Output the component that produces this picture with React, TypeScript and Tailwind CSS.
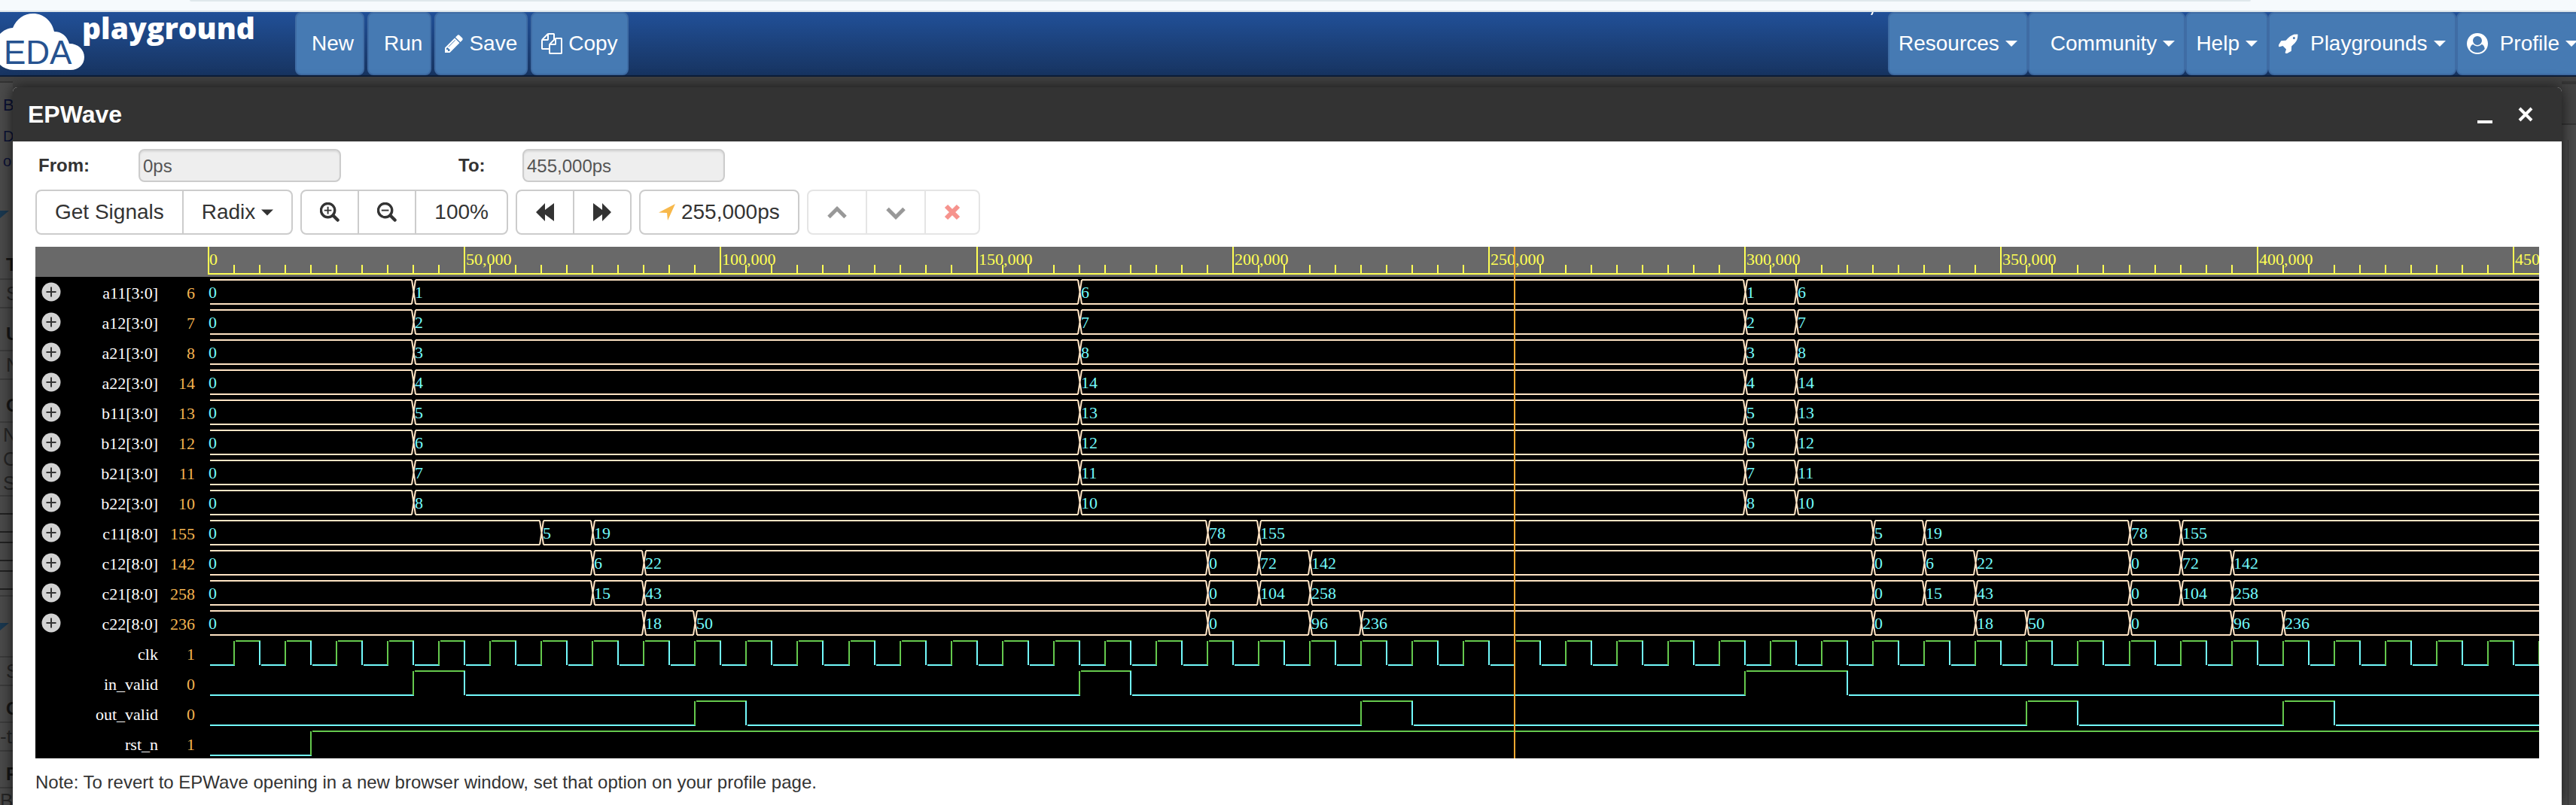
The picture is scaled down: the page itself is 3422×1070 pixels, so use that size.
import React from "react";

/* ---------- icons ---------- */

function Caret({ className = "" }: { className?: string }) {
  return (
    <svg viewBox="0 0 16 8" className={"h-2 w-4 shrink-0 " + className} fill="currentColor" aria-hidden="true">
      <path d="M0 0h16L8 8z" />
    </svg>
  );
}

function PencilIcon() {
  return (
    <svg viewBox="128 128 1536 1536" className="h-6 w-6 shrink-0" fill="currentColor" aria-hidden="true">
      <path d="M491 1536l91-91-235-235-91 91v107h128v128h107zm523-928q0-22-22-22-10 0-17 7l-542 542q-7 7-7 17 0 22 22 22 10 0 17-7l542-542q7-7 7-17zm-54-192l416 416-832 832h-416v-416zm683 96q0 53-37 90l-166 166-416-416 166-165q36-38 90-38 53 0 91 38l235 234q37 39 37 91z" />
    </svg>
  );
}

function FilesIcon() {
  return (
    <svg viewBox="0 0 1792 1792" className="h-7 w-7 shrink-0" fill="currentColor" aria-hidden="true">
      <path d="M1696 384q40 0 68 28t28 68v1216q0 40-28 68t-68 28h-960q-40 0-68-28t-28-68v-288h-544q-40 0-68-28t-28-68v-672q0-40 20-88t48-76l408-408q28-28 76-48t88-20h416q40 0 68 28t28 68v328q68-40 128-40h416zm-544 213l-299 299h299v-299zm-640-384l-299 299h299v-299zm196 647l316-316v-416h-384v416q0 40-28 68t-68 28h-416v640h512v-256q0-40 20-88t48-76zm956 804v-1152h-384v416q0 40-28 68t-68 28h-416v640h896z" />
    </svg>
  );
}

function RocketIcon() {
  return (
    <svg viewBox="64 96 1632 1632" className="h-[26px] w-[26px] shrink-0" fill="currentColor" aria-hidden="true">
      <path d="M1440 448q0-40-28-68t-68-28-68 28-28 68 28 68 68 28 68-28 28-68zm224-288q0 249-75.500 430.500t-253.500 360.500q-81 80-195 176l-20 379q-2 16-16 26l-384 224q-7 4-16 4-12 0-23-9l-64-64q-13-14-8-32l85-276-281-281-276 85q-3 1-9 1-14 0-23-9l-64-64q-17-19-5-39l224-384q10-14 26-16l379-20q96-114 176-195 188-187 358-258t431-71q14 0 24 9.500t10 22.500z" />
    </svg>
  );
}

function UserIcon() {
  return (
    <svg viewBox="0 0 1792 1792" className="h-7 w-7 shrink-0" fill="currentColor" aria-hidden="true">
      <path d="M1523 1339q-22-155-87.500-257.500t-184.500-118.500q-67 74-159.500 115.500t-195.500 41.500-195.500-41.500-159.500-115.500q-119 16-184.500 118.500t-87.500 257.500q106 150 271 237.500t356 87.500 356-87.500 271-237.500zm-243-699q0-159-112.500-271.500t-271.500-112.500-271.500 112.500-112.500 271.500 112.500 271.500 271.500 112.500 271.500-112.500 112.500-271.500zm512 256q0 182-71 347.500t-190.500 286-285.500 191.500-349 71q-182 0-348-71t-286-191-191-286-71-348 71-348 191-286 286-191 348-71 348 71 286 191 191 286 71 348z" />
    </svg>
  );
}

function ZoomIcon({ plus }: { plus?: boolean }) {
  return (
    <svg viewBox="1 1 27 27" className="h-[26px] w-[26px]" fill="none" stroke="currentColor" aria-hidden="true">
      <circle cx="12" cy="12" r="9.500" strokeWidth="3.500" />
      <path d="M19.500 19.500l6 6" strokeWidth="4.500" strokeLinecap="round" />
      <path d={plus ? "M7 12h10M12 7v10" : "M7 12h10"} strokeWidth="2" />
    </svg>
  );
}

function SkipIcon({ forward }: { forward?: boolean }) {
  return (
    <svg viewBox="1 1 26 26" className="h-[26px] w-[26px]" fill="currentColor" aria-hidden="true">
      <path d={forward ? "M2 2l12 9V2l12 12-12 12v-9L2 26z" : "M26 2l-12 9V2L2 14l12 12v-9l12 9z"} />
    </svg>
  );
}

function ChevronIcon({ down }: { down?: boolean }) {
  return (
    <svg viewBox="0 0 28 28" className="h-7 w-7" fill="none" stroke="currentColor" strokeWidth="5" aria-hidden="true">
      <path d={down ? "M3 9.500l11 11 11-11" : "M3 20.500l11-11 11 11"} />
    </svg>
  );
}

/* ---------- top bar ---------- */

const NAV =
  "flex h-[84px] shrink-0 items-center rounded-lg border-2 border-[#3f6ca4] bg-[#467ab3] text-[28px] leading-10 text-white";

function Logo() {
  return (
    <a href="#home" aria-label="EDA playground" className="flex w-[392px] shrink-0">
      <svg viewBox="0 0 360 84" className="h-[84px] w-[360px] overflow-visible">
        <path
          fill="#fff"
          d="M-8 50C-8 34 3 22 17 21C22 9 32 2 44 2C58 2 69 12 72 26C82 26 89 32 92 42C104 42 112 50 112 60C112 70 104 77 94 77H18C3 77 -8 66 -8 50Z"
        />
        <text x="5" y="69" fontFamily="'Liberation Sans', Arial, sans-serif" fontSize="44" fill="#26528f">
          EDA
        </text>
        <text x="109" y="36" fontFamily="'Open Sans', sans-serif" fontWeight="800" fontSize="39" fill="#fff">
          playground
        </text>
      </svg>
    </a>
  );
}

function TopBar() {
  return (
    <header>
      <div className="flex h-4 justify-center border-b-2 border-[#dbe4e9] bg-[#f6fafd]">
        <div className="mr-[180px] h-[2px] w-4/5 rounded-b-sm bg-[#dfe8ec]" />
      </div>
      <nav className="flex overflow-hidden border-b-2 border-[#0d1e3a] bg-linear-to-b from-[#215098] to-[#173461]">
        <Logo />
        <div className="flex gap-1">
          <button className={NAV + " pr-3 pl-5"}>New</button>
          <button className={NAV + " pr-2.5 pl-5"}>Run</button>
          <button className={NAV + " gap-2 px-3"}>
            <PencilIcon />
            Save
          </button>
          <button className={NAV + " gap-2 px-3"}>
            <FilesIcon />
            Copy
          </button>
        </div>
        <div className="-mr-4 ml-auto flex">
          <svg viewBox="0 0 8 4" className="mr-4 h-1 w-2" aria-hidden="true">
            <path d="M4 0L2 4" stroke="#fff" strokeWidth="2" />
          </svg>
          <button className={NAV + " gap-2 px-3"}>
            Resources
            <Caret />
          </button>
          <button className={NAV + " gap-2 pr-3 pl-7"}>
            Community
            <Caret />
          </button>
          <button className={NAV + " gap-2 px-3"}>
            Help
            <Caret />
          </button>
          <button className={NAV + " px-3"}>
            <RocketIcon />
            <span className="mr-2 ml-4">Playgrounds</span>
            <Caret />
          </button>
          <button className={NAV + " px-3"}>
            <UserIcon />
            <span className="mr-2 ml-4">Profile</span>
            <Caret />
          </button>
        </div>
      </nav>
    </header>
  );
}

/* ---------- dimmed page edges ---------- */

const LINE = "border-b-2 border-[#3c3c3c]";

function LeftEdge() {
  return (
    <aside className="w-[17px] shrink-0 overflow-hidden border-t-2 border-[#333] bg-[#4b4b4b] leading-8 text-[#262626]">
      <div className="flex h-[60px] items-center pl-1 text-[22px] text-[#0b1236]">B</div>
      <div className="flex h-[22px] items-center pl-1 text-xl text-[#0b1236]">D</div>
      <div className="flex h-[44px] items-center pl-1 text-xl text-[#0b1236]">o</div>
      <div className="flex h-[98px] items-center">
        <svg viewBox="0 0 12 10" className="h-[10px] w-3" aria-hidden="true">
          <path d="M-12 0H12L0 10z" fill="#1a3850" />
        </svg>
      </div>
      <div className={"flex h-[38px] items-center pl-2 text-2xl font-bold text-[#161616] " + LINE}>T</div>
      <div className={"flex h-[38px] items-center pl-2 text-[26px] " + LINE}>S</div>
      <div className={"flex h-[57px] items-center pt-3 pl-2 text-2xl font-bold text-[#161616] " + LINE}>U</div>
      <div className={"flex h-[38px] items-center pl-2 text-[26px] " + LINE}>N</div>
      <div className={"flex h-[57px] items-center pt-3 pl-2 text-2xl font-bold text-[#161616] " + LINE}>O</div>
      <div className={"flex h-[98px] flex-col pl-1 text-[26px] " + LINE}>
        <span>N</span>
        <span>C</span>
        <span>S</span>
      </div>
      <div className={"flex h-[133px] flex-col gap-3 pt-[22px] " + LINE}>
        <div className="h-[26px] border-y-2 border-[#222]" />
        <div className="h-[26px] border-y-2 border-[#222]" />
        <div className="h-[26px] border-y-2 border-[#222]" />
      </div>
      <div className={"flex h-[81px] items-center " + LINE}>
        <svg viewBox="0 0 12 10" className="h-[10px] w-3" aria-hidden="true">
          <path d="M-12 0H12L0 10z" fill="#1a3850" />
        </svg>
      </div>
      <div className={"flex h-[38px] items-center pl-2 text-[26px] " + LINE}>S</div>
      <div className={"flex h-[49px] items-center pt-3 pl-2 text-2xl font-bold text-[#161616] " + LINE}>C</div>
      <div className={"flex h-[38px] items-center text-[26px] " + LINE}>-t</div>
      <div className={"flex h-[49px] items-center pt-3 pl-2 text-2xl font-bold text-[#161616] " + LINE}>F</div>
      <div className="flex h-[21px] items-start text-[26px]">B</div>
    </aside>
  );
}

function RightEdge() {
  return (
    <aside className="flex w-[19px] shrink-0 flex-col border-t-4 border-[#363636] bg-[#4b4b4b]">
      <div className="h-[54px] border-b-2 border-[#363636] bg-[#444]" />
      <div className="mt-[20px] ml-2 flex-1 border-l border-[#3a3a3a]" />
    </aside>
  );
}

/* ---------- waveform data (times in ns, 1 ns = 1000 ps) ---------- */

type Step = [number, string];
type Signal =
  | { kind: "bus"; name: string; value: string; steps: Step[] }
  | { kind: "bit"; name: string; value: string; toggles: number[] };

const END = 455;
const PX = 6.804;
const ORIGIN = 2;
const ROW = 40;
const RULER = 40;
const X = (t: number) => Math.round(ORIGIN + t * PX);

const input = (name: string, first: string, second: string): Signal => ({
  kind: "bus",
  name,
  value: second,
  steps: [
    [0, "0"],
    [40, first],
    [170, second],
    [300, first],
    [310, second],
  ],
});

const range = (n: number) => Array.from({ length: n }, (_, i) => i);

const SIGNALS: Signal[] = [
  input("a11[3:0]", "1", "6"),
  input("a12[3:0]", "2", "7"),
  input("a21[3:0]", "3", "8"),
  input("a22[3:0]", "4", "14"),
  input("b11[3:0]", "5", "13"),
  input("b12[3:0]", "6", "12"),
  input("b21[3:0]", "7", "11"),
  input("b22[3:0]", "8", "10"),
  {
    kind: "bus",
    name: "c11[8:0]",
    value: "155",
    steps: [[0, "0"], [65, "5"], [75, "19"], [195, "78"], [205, "155"], [325, "5"], [335, "19"], [375, "78"], [385, "155"]],
  },
  {
    kind: "bus",
    name: "c12[8:0]",
    value: "142",
    steps: [[0, "0"], [75, "6"], [85, "22"], [195, "0"], [205, "72"], [215, "142"], [325, "0"], [335, "6"], [345, "22"], [375, "0"], [385, "72"], [395, "142"]],
  },
  {
    kind: "bus",
    name: "c21[8:0]",
    value: "258",
    steps: [[0, "0"], [75, "15"], [85, "43"], [195, "0"], [205, "104"], [215, "258"], [325, "0"], [335, "15"], [345, "43"], [375, "0"], [385, "104"], [395, "258"]],
  },
  {
    kind: "bus",
    name: "c22[8:0]",
    value: "236",
    steps: [[0, "0"], [85, "18"], [95, "50"], [195, "0"], [215, "96"], [225, "236"], [325, "0"], [345, "18"], [355, "50"], [375, "0"], [395, "96"], [405, "236"]],
  },
  { kind: "bit", name: "clk", value: "1", toggles: range(91).map((i) => 5 + i * 5) },
  { kind: "bit", name: "in_valid", value: "0", toggles: [40, 50, 170, 180, 300, 320] },
  { kind: "bit", name: "out_valid", value: "0", toggles: [95, 105, 225, 235, 355, 365, 405, 415] },
  { kind: "bit", name: "rst_n", value: "1", toggles: [20] },
];

const SERIF = "'Liberation Serif', 'Times New Roman', serif";
const GREEN = "#65c94d";
const CYAN = "#73fbfd";

function BusTrace({ steps, y }: { steps: Step[]; y: number }) {
  const top = y + 4;
  const bottom = y + 36;
  return (
    <g>
      {steps.map(([t, label], i) => {
        const x0 = i === 0 ? X(0) + 2 : X(t) + 3;
        const last = i === steps.length - 1;
        const x1 = last ? X(END) : X(steps[i + 1][0]) - 2;
        return (
          <g key={t}>
            <path d={`M${x0} ${top}H${x1}M${x0} ${bottom}H${x1}`} stroke="#ffe4c4" strokeWidth="2" shapeRendering="crispEdges" />
            {!last && <path d={`M${x1} ${top}L${x1 + 5} ${bottom}M${x1 + 5} ${top}L${x1} ${bottom}`} stroke="#ffe4c4" strokeWidth="2" fill="none" />}
            <text x={i === 0 ? X(0) : X(t) + 2} y={y + 28} fontSize="22" fontFamily={SERIF} fill={CYAN}>
              {label}
            </text>
          </g>
        );
      })}
    </g>
  );
}

function BitTrace({ toggles, y }: { toggles: number[]; y: number }) {
  const points = [0, ...toggles];
  return (
    <g strokeWidth="2" shapeRendering="crispEdges">
      {points.map((t, i) => {
        const high = i % 2 === 1;
        const level = high ? y + 4 : y + 36;
        const end = i + 1 < points.length ? X(points[i + 1]) + 1 : X(END);
        return (
          <g key={t} stroke={high ? GREEN : CYAN}>
            {i > 0 && <path d={`M${X(t)} ${y + 4}V${y + 36}`} />}
            {t < END && <path d={`M${X(t) + 2} ${level}H${end}`} />}
          </g>
        );
      })}
    </g>
  );
}

function WaveCanvas() {
  const height = RULER + ROW * SIGNALS.length;
  return (
    <svg className="h-[680px] min-w-0 flex-1 overflow-hidden bg-black" role="img" aria-label="Signal waveforms">
      <rect width="100%" height={RULER} fill="#696969" />
      <g stroke="#ffff54" strokeWidth="2" shapeRendering="crispEdges">
        <path d={`M${X(0) - 1} 36H${X(END)}`} />
        {range(91).map((i) => (
          <path key={i} d={`M${X(i * 5)} ${i % 10 === 0 ? 0 : 24}V36`} />
        ))}
      </g>
      {range(10).map((i) => (
        <text key={i} x={X(i * 50) + (i ? 2 : 1)} y="24" fontSize="22" fontFamily={SERIF} fill="#ffff54">
          {(i * 50000).toLocaleString("en-US")}
        </text>
      ))}
      {SIGNALS.map((s, i) =>
        s.kind === "bus" ? (
          <BusTrace key={s.name} steps={s.steps} y={RULER + i * ROW} />
        ) : (
          <BitTrace key={s.name} toggles={s.toggles} y={RULER + i * ROW} />
        ),
      )}
      <path d={`M${X(255)} 0V${height}`} stroke="#f0a830" strokeWidth="2" shapeRendering="crispEdges" />
    </svg>
  );
}

function SignalList() {
  return (
    <div className="w-[228px] shrink-0 bg-black font-['Liberation_Serif','Times_New_Roman',serif] text-[22px]">
      <div className="h-10 bg-[#696969]" />
      <ul>
        {SIGNALS.map((s) => (
          <li key={s.name} className="flex h-10 items-center pl-2">
            {s.kind === "bus" && (
              <button aria-label={"Expand " + s.name} className="h-[26px] w-[26px]">
                <svg viewBox="0 0 26 26" className="h-full w-full">
                  <circle cx="13" cy="13" r="12.500" fill="#d3d3d3" />
                  <path d="M13 6.500v13M6.500 13h13" stroke="#333" strokeWidth="2" />
                </svg>
              </button>
            )}
            <span className="ml-auto pt-1 leading-9 text-white">{s.name}</span>
            <span className="mr-4 w-[49px] pt-1 text-right leading-9 text-[#f4b350]">{s.value}</span>
          </li>
        ))}
      </ul>
    </div>
  );
}

/* ---------- wave window ---------- */

const GROUP = "flex h-[60px] divide-x-2 divide-[#ccc] rounded-lg border-2 border-[#ccc] bg-white";
const TOOL = "flex items-center justify-center px-6";

function TextField({ id, label, value, className }: { id: string; label: string; value: string; className: string }) {
  return (
    <div className={"flex items-center " + className}>
      <label htmlFor={id} className="flex-1 text-2xl font-bold text-[#333]">
        {label}
      </label>
      <input
        id={id}
        readOnly
        value={value}
        className="h-11 w-[269px] rounded-lg border-2 border-[#ccc] bg-[#eee] px-1 pt-[2px] text-2xl text-[#555] shadow-[inset_0_2px_2px_rgba(0,0,0,0.075)]"
      />
    </div>
  );
}

function Toolbar() {
  return (
    <div className="mt-[10px] flex gap-[10px] pl-[30px] text-[28px] leading-10 text-[#333]">
      <div className={GROUP}>
        <button className={TOOL}>Get Signals</button>
        <button className={TOOL + " gap-2"}>
          Radix
          <Caret className="h-[9px]" />
        </button>
      </div>
      <div className={GROUP}>
        <button className={TOOL} aria-label="Zoom in">
          <ZoomIcon plus />
        </button>
        <button className={TOOL} aria-label="Zoom out">
          <ZoomIcon />
        </button>
        <button className={TOOL}>100%</button>
      </div>
      <div className={GROUP}>
        <button className={TOOL} aria-label="Back">
          <SkipIcon />
        </button>
        <button className={TOOL} aria-label="Forward">
          <SkipIcon forward />
        </button>
      </div>
      <div className={GROUP}>
        <button className={TOOL + " gap-2"}>
          <svg viewBox="0 0 22 22" className="h-[22px] w-[22px]" fill="#f7b84b" aria-hidden="true">
            <path d="M22 0L12 22L11 12L0 11.500z" />
          </svg>
          255,000ps
        </button>
      </div>
      <div className={GROUP + " opacity-50"}>
        <button className={TOOL} aria-label="Previous edge">
          <ChevronIcon />
        </button>
        <button className={TOOL} aria-label="Next edge">
          <ChevronIcon down />
        </button>
        <button className={TOOL} aria-label="Remove cursor">
          <svg viewBox="0 0 22 22" className="h-[22px] w-[22px]" fill="none" stroke="#ee2a1e" strokeWidth="6" aria-hidden="true">
            <path d="M3 3l16 16M19 3L3 19" />
          </svg>
        </button>
      </div>
    </div>
  );
}

function WaveWindow() {
  return (
    <section className="relative z-10 mt-2 flex min-w-0 flex-1 flex-col rounded-t-md bg-white shadow-[0_0_20px_rgba(0,0,0,0.7)]">
      <div className="flex h-[72px] items-center rounded-t-md bg-[#333] pr-9 pl-5 text-white">
        <h1 className="flex-1 text-[32px] leading-10 font-bold">EPWave</h1>
        <button aria-label="Minimize" className="mr-[30px] h-6 w-6">
          <svg viewBox="0 0 24 24" className="h-6 w-6">
            <path d="M2 22h20" stroke="#fff" strokeWidth="4" />
          </svg>
        </button>
        <button aria-label="Close" className="h-6 w-6">
          <svg viewBox="0 0 24 24" className="h-6 w-6">
            <path d="M4 4l16 16M20 4L4 20" stroke="#fff" strokeWidth="4" />
          </svg>
        </button>
      </div>
      <div className="mt-[10px] flex">
        <TextField id="from" label="From:" value="0ps" className="ml-[34px] w-[402px]" />
        <TextField id="to" label="To:" value="455,000ps" className="ml-[156px] w-[354px]" />
      </div>
      <Toolbar />
      <div className="mx-[30px] mt-4 flex">
        <SignalList />
        <WaveCanvas />
      </div>
      <p className="mt-4 ml-[30px] text-2xl leading-8 text-[#333]">
        Note: To revert to EPWave opening in a new browser window, set that option on your profile page.
      </p>
    </section>
  );
}

export default function App() {
  return (
    <div className="flex min-h-screen flex-col overflow-hidden bg-[#424242] font-['Liberation_Sans',Arial,sans-serif]">
      <TopBar />
      <main className="mt-[6px] flex flex-1">
        <LeftEdge />
        <WaveWindow />
        <RightEdge />
      </main>
    </div>
  );
}
